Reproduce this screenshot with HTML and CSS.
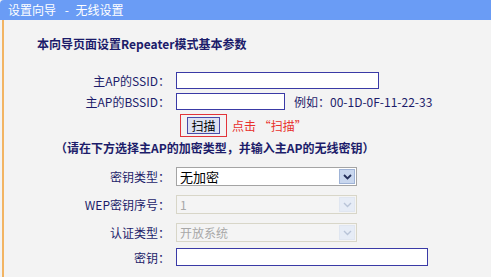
FILE: index.html
```html
<!DOCTYPE html>
<html lang="zh-CN">
<head>
    <meta charset="UTF-8">
    <title>设置向导 - 无线设置</title>
    <link rel="stylesheet" href="styles.css">
</head>
<body>

    <header class="bar">设置向导 <span class="dash">-</span> 无线设置</header>

    <div class="panel">
        <p class="title">本向导页面设置Repeater模式基本参数</p>

        <div class="row row-text">
            <label class="label">主AP的SSID：</label>
            <input type="text" class="field ssid">
        </div>
        <div class="row row-text">
            <label class="label">主AP的BSSID：</label>
            <input type="text" class="field bssid">
            <span class="hint">例如：00-1D-0F-11-22-33</span>
        </div>
        <div class="row row-scan">
            <span class="label"></span>
            <span class="scan-frame"><button class="scan">扫描</button></span>
            <span class="scan-tip">点击 “扫描”</span>
        </div>

        <p class="note">（请在下方选择主AP的加密类型，并输入主AP的无线密钥）</p>

        <div class="row row-sel first">
            <label class="label">密钥类型：</label>
            <div class="select">
                <span class="value">无加密</span>
                <span class="arrow"><svg width="9" height="6" viewBox="0 0 9 6"><path d="M1 1 L4.5 4.5 L8 1" fill="none" stroke="#25305a" stroke-width="1.8"/></svg></span>
            </div>
        </div>
        <div class="row row-sel">
            <label class="label">WEP密钥序号：</label>
            <div class="select off">
                <span class="value">1</span>
                <span class="arrow"><svg width="9" height="6" viewBox="0 0 9 6"><path d="M1 1 L4.5 4.5 L8 1" fill="none" stroke="#b9c4d8" stroke-width="1.4"/></svg></span>
            </div>
        </div>
        <div class="row row-sel">
            <label class="label">认证类型：</label>
            <div class="select off">
                <span class="value">开放系统</span>
                <span class="arrow"><svg width="9" height="6" viewBox="0 0 9 6"><path d="M1 1 L4.5 4.5 L8 1" fill="none" stroke="#b9c4d8" stroke-width="1.4"/></svg></span>
            </div>
        </div>
        <div class="row row-key">
            <label class="label">密钥：</label>
            <input type="text" class="field key">
        </div>
    </div>

</body>
</html>
```
FILE: styles.css
```css
body {
    margin: 0;
    font-family: "Noto Sans CJK SC", "DejaVu Sans", sans-serif;
    font-size: 12px;
    background-color: #f3f3f3;
    color: #1c1c6a;
}
.bar {
    height: 20px;
    line-height: 19px;
    padding-left: 8px;
    background-color: #6a9cf5;
    color: #fff;
    border-top-left-radius: 4px;
}
.dash {
    margin: 0 4px 0 6px;
}
.panel {
    margin-left: 2px;
    border-left: 2px solid #f2b463;
    min-height: 257px;
    padding-top: 16px;
    box-sizing: border-box;
}
.title {
    margin: 0 0 0 33px;
    line-height: 16px;
    font-weight: bold;
}
.row {
    display: flex;
    align-items: center;
}
.label {
    width: 166px;
    text-align: right;
    flex: none;
    margin-right: 6px;
}
.row-text {
    height: 17px;
    margin-top: 4px;
}
.row-text:first-of-type {
    margin-top: 20px;
}
.field {
    box-sizing: border-box;
    height: 17px;
    margin: 0;
    padding: 0 3px;
    border: 1px solid #3a3aa6;
    background-color: #fff;
    font: inherit;
}
.ssid {
    width: 203px;
}
.bssid {
    width: 109px;
}
.hint {
    margin-left: 9px;
}
.row-scan {
    height: 23px;
    margin-top: 4px;
}
.scan-frame {
    box-sizing: border-box;
    height: 23px;
    width: 47px;
    margin-left: 4px;
    border: 1px solid #e2343a;
    display: flex;
    align-items: center;
    justify-content: center;
}
.scan {
    height: 17px;
    width: 33px;
    padding: 0;
    border: 1px solid #4a4aa8;
    background-color: #dde2f2;
    color: #000;
    font: inherit;
    line-height: 14px;
}
.scan-tip {
    margin-left: 5px;
    color: #e8302c;
}
.note {
    margin: 4px 0 0 51px;
    line-height: 14px;
    font-weight: bold;
}
.row-sel {
    height: 19px;
    margin-top: 9px;
}
.row-sel.first {
    margin-top: 12px;
}
.select {
    box-sizing: border-box;
    width: 181px;
    height: 19px;
    border: 1px solid #a4a4a4;
    background-color: #fff;
    display: flex;
    align-items: center;
    color: #000;
    font-size: 13px;
}
.select .value {
    flex: 1;
    padding-left: 3px;
}
.select .arrow {
    width: 16px;
    height: 15px;
    margin-right: 1px;
    background-color: #c9d7ee;
    border: 1px solid #9fb3d6;
    box-sizing: border-box;
    display: flex;
    align-items: center;
    justify-content: center;
}
.select.off {
    border-color: #d8d6c8;
    background-color: #f4f4f4;
    color: #a8a8a8;
    font-size: 12px;
}
.select.off .arrow {
    background-color: #e6ecf6;
    border-color: #e0e6f0;
}
.row-key {
    height: 18px;
    margin-top: 6px;
}
.key {
    width: 252px;
    height: 18px;
}
```
